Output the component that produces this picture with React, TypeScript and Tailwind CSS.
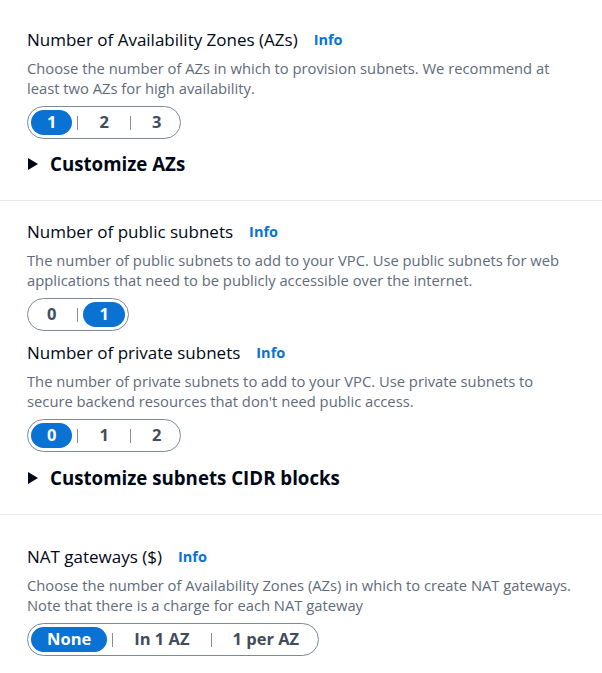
import { Fragment } from 'react';

type SegmentProps = { options: string[]; selected: number };

function Segmented({ options, selected }: SegmentProps) {
  return (
    <div className="inline-flex h-[33px] items-center rounded-full border border-[#7d8998] p-[3px]">
      {options.map((opt, i) => {
        const active = i === selected;
        return (
          <Fragment key={opt}>
            {i > 0 ? <span className="mx-[5px] h-[14px] w-px bg-[#8c8c94]" /> : null}
            <span
              className={`flex h-[25px] items-center rounded-full px-[16px] text-[16.5px] font-bold leading-none ${
                active ? 'bg-[#0972d3] text-white' : 'text-[#414d5c]'
              }`}
            >
              {opt}
            </span>
          </Fragment>
        );
      })}
    </div>
  );
}

function Label({ title, className }: { title: string; className?: string }) {
  return (
    <div className={`flex items-center text-[17px] leading-[22px] text-[#000716] ${className ?? ''}`}>
      <span>{title}</span>
      <span className="ml-[16px] text-[14.5px] font-bold text-[#0972d3]">Info</span>
    </div>
  );
}

function Desc({ children }: { children: string }) {
  return <p className="mt-[7px] text-[14.75px] leading-[20px] text-[#5f6b7a]">{children}</p>;
}

function Expander({ title, className }: { title: string; className?: string }) {
  return (
    <div className={`flex items-center gap-[12px] text-[18.7px] font-bold leading-[24px] text-[#000716] ${className ?? ''}`}>
      <svg width="10" height="12" viewBox="0 0 10 12" className="ml-px">
        <path d="M0 0 L10 6 L0 12 Z" fill="#000716" />
      </svg>
      <span>{title}</span>
    </div>
  );
}

export default function App() {
  return (
    <div className="min-h-[673px] bg-white" style={{ fontFamily: '"Open Sans", "Noto Sans", sans-serif' }}>
      <section className="pl-[27px] pr-[24px] pt-[29px] pb-[24px]">
        <Label title="Number of Availability Zones (AZs)" />
        <Desc>
          Choose the number of AZs in which to provision subnets. We recommend at least two AZs for high availability.
        </Desc>
        <div className="mt-[8px]">
          <Segmented options={['1', '2', '3']} selected={0} />
        </div>
        <Expander title="Customize AZs" className="mt-[13px]" />
      </section>

      <div className="h-px bg-[#e9ebed]" />

      <section className="pl-[27px] pr-[24px] pt-[20px] pb-[24px]">
        <Label title="Number of public subnets" />
        <Desc>
          The number of public subnets to add to your VPC. Use public subnets for web applications that need to be
          publicly accessible over the internet.
        </Desc>
        <div className="mt-[8px]">
          <Segmented options={['0', '1']} selected={1} />
        </div>
        <Label title="Number of private subnets" className="mt-[11px]" />
        <Desc>
          The number of private subnets to add to your VPC. Use private subnets to secure backend resources that
          don't need public access.
        </Desc>
        <div className="mt-[8px]">
          <Segmented options={['0', '1', '2']} selected={0} />
        </div>
        <Expander title="Customize subnets CIDR blocks" className="mt-[14px]" />
      </section>

      <div className="h-px bg-[#e9ebed]" />

      <section className="pl-[27px] pr-[24px] pt-[31px] pb-[16px]">
        <Label title="NAT gateways ($)" />
        <Desc>
          Choose the number of Availability Zones (AZs) in which to create NAT gateways. Note that there is a charge
          for each NAT gateway
        </Desc>
        <div className="mt-[8px]">
          <Segmented options={['None', 'In 1 AZ', '1 per AZ']} selected={0} />
        </div>
      </section>
    </div>
  );
}
